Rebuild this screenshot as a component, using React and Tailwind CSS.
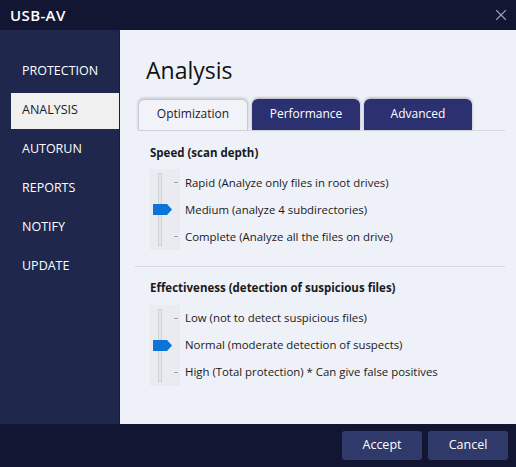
import React, { useState } from 'react';
import { X } from 'lucide-react';

const font = { fontFamily: '"Open Sans", "Noto Sans", sans-serif' };

const navItems = ['PROTECTION', 'ANALYSIS', 'AUTORUN', 'REPORTS', 'NOTIFY', 'UPDATE'];
const tabs = ['Optimization', 'Performance', 'Advanced'];

function LevelSlider({ options, value }) {
  return (
    <div className="flex">
      <div className="relative w-[30px] ml-[15px] bg-[#e9ebf1]">
        <div className="absolute left-[8px] top-[4px] bottom-[4px] w-[4px] border border-[#d0d2d8] bg-[#e6e6e6]" />
      </div>
      <div className="flex flex-col pl-[5px]">
        {options.map((o, i) => (
          <div key={o} className="relative h-[27px] flex items-center">
            {i === value ? (
              <svg className="absolute left-[-32px] top-[8px]" width="19" height="11" viewBox="0 0 19 11">
                <path d="M0 0H14L19 5.5L14 11H0Z" fill="#0b74d7" />
              </svg>
            ) : (
              <div className="absolute left-[-11px] top-[13px] w-[4px] h-px bg-[#a0a0a0]" />
            )}
            <span className="text-[11.4px] text-[#1a1a1a]">{o}</span>
          </div>
        ))}
      </div>
    </div>
  );
}

export default function App() {
  const [active, setActive] = useState(1);
  const [tab, setTab] = useState(0);

  return (
    <div className="w-[516px] h-[467px] flex flex-col overflow-hidden select-none" style={font}>
      {/* Title bar */}
      <div className="h-[30px] bg-[#121633] flex items-center justify-between pl-[10px] pr-[6px]">
        <span className="text-white text-[15px] font-semibold tracking-wide">USB-AV</span>
        <X size={18} strokeWidth={1.5} className="text-[#9aa0b4]" />
      </div>

      <div className="flex-1 flex min-h-0">
        {/* Sidebar */}
        <div className="w-[120px] bg-[#1f274c] pt-[22px] flex flex-col border-r border-[#181d3a]">
          {navItems.map((n, i) => (
            <div key={n} className="h-[39px] flex items-center" onClick={() => setActive(i)}>
              {i === active ? (
                <div className="ml-[11px] w-full h-[36px] bg-[#f0f0f0] flex items-center pl-[11px] text-[12.5px] text-[#1a1a2e]">{n}</div>
              ) : (
                <div className="pl-[22px] text-[12.5px] text-white">{n}</div>
              )}
            </div>
          ))}
        </div>

        {/* Content */}
        <div className="flex-1 bg-[#eef1f8] flex flex-col">
          <h1 className="pl-[26px] pt-[25px] text-[23px] leading-[30px] text-[#111]">Analysis</h1>

          <div className="mt-[14px] ml-[18px] mr-[11px] flex gap-[4px] border-b border-[#d6d8de] h-[32px] items-end">
            {tabs.map((t, i) => (
              <button
                key={t}
                onClick={() => setTab(i)}
                className={
                  i === tab
                    ? 'w-[110px] h-[31px] pb-[2px] rounded-t-[6px] bg-[#f1f3f9] border border-b-0 border-[#c8cad2] shadow-[0_-1px_3px_rgba(0,0,0,0.2)] text-[12px] text-[#1a1a2e]'
                    : 'w-[108px] h-[31px] pb-[2px] rounded-t-[6px] bg-[#2b3170] shadow-[0_-1px_3px_rgba(0,0,0,0.3)] text-[12px] text-white'
                }
              >
                {t}
              </button>
            ))}
          </div>

          <div className="ml-[15px] mr-[11px] pb-[16px] border-b border-[#d6d8de]">
            <div className="pl-[15px] pt-[13px] pb-[8px] text-[11.5px] font-bold text-[#1a1a1a]">Speed (scan depth)</div>
            <LevelSlider
              value={1}
              options={[
                'Rapid (Analyze only files in root drives)',
                'Medium (analyze 4 subdirectories)',
                'Complete (Analyze all the files on drive)',
              ]}
            />
          </div>

          <div className="ml-[15px] mr-[11px]">
            <div className="pl-[15px] pt-[12px] pb-[8px] text-[11.5px] font-bold text-[#1a1a1a]">Effectiveness (detection of suspicious files)</div>
            <LevelSlider
              value={1}
              options={[
                'Low (not to detect suspicious files)',
                'Normal (moderate detection of suspects)',
                'High (Total protection) * Can give false positives',
              ]}
            />
          </div>
        </div>
      </div>

      {/* Bottom bar */}
      <div className="h-[43px] bg-[#121633] flex items-center justify-end gap-[6px] pr-[8px]">
        <button className="w-[80px] h-[29px] rounded-[3px] bg-[#2f3a6b] text-white text-[12.5px]">Accept</button>
        <button className="w-[80px] h-[29px] rounded-[3px] bg-[#2f3a6b] text-white text-[12.5px]">Cancel</button>
      </div>
    </div>
  );
}
